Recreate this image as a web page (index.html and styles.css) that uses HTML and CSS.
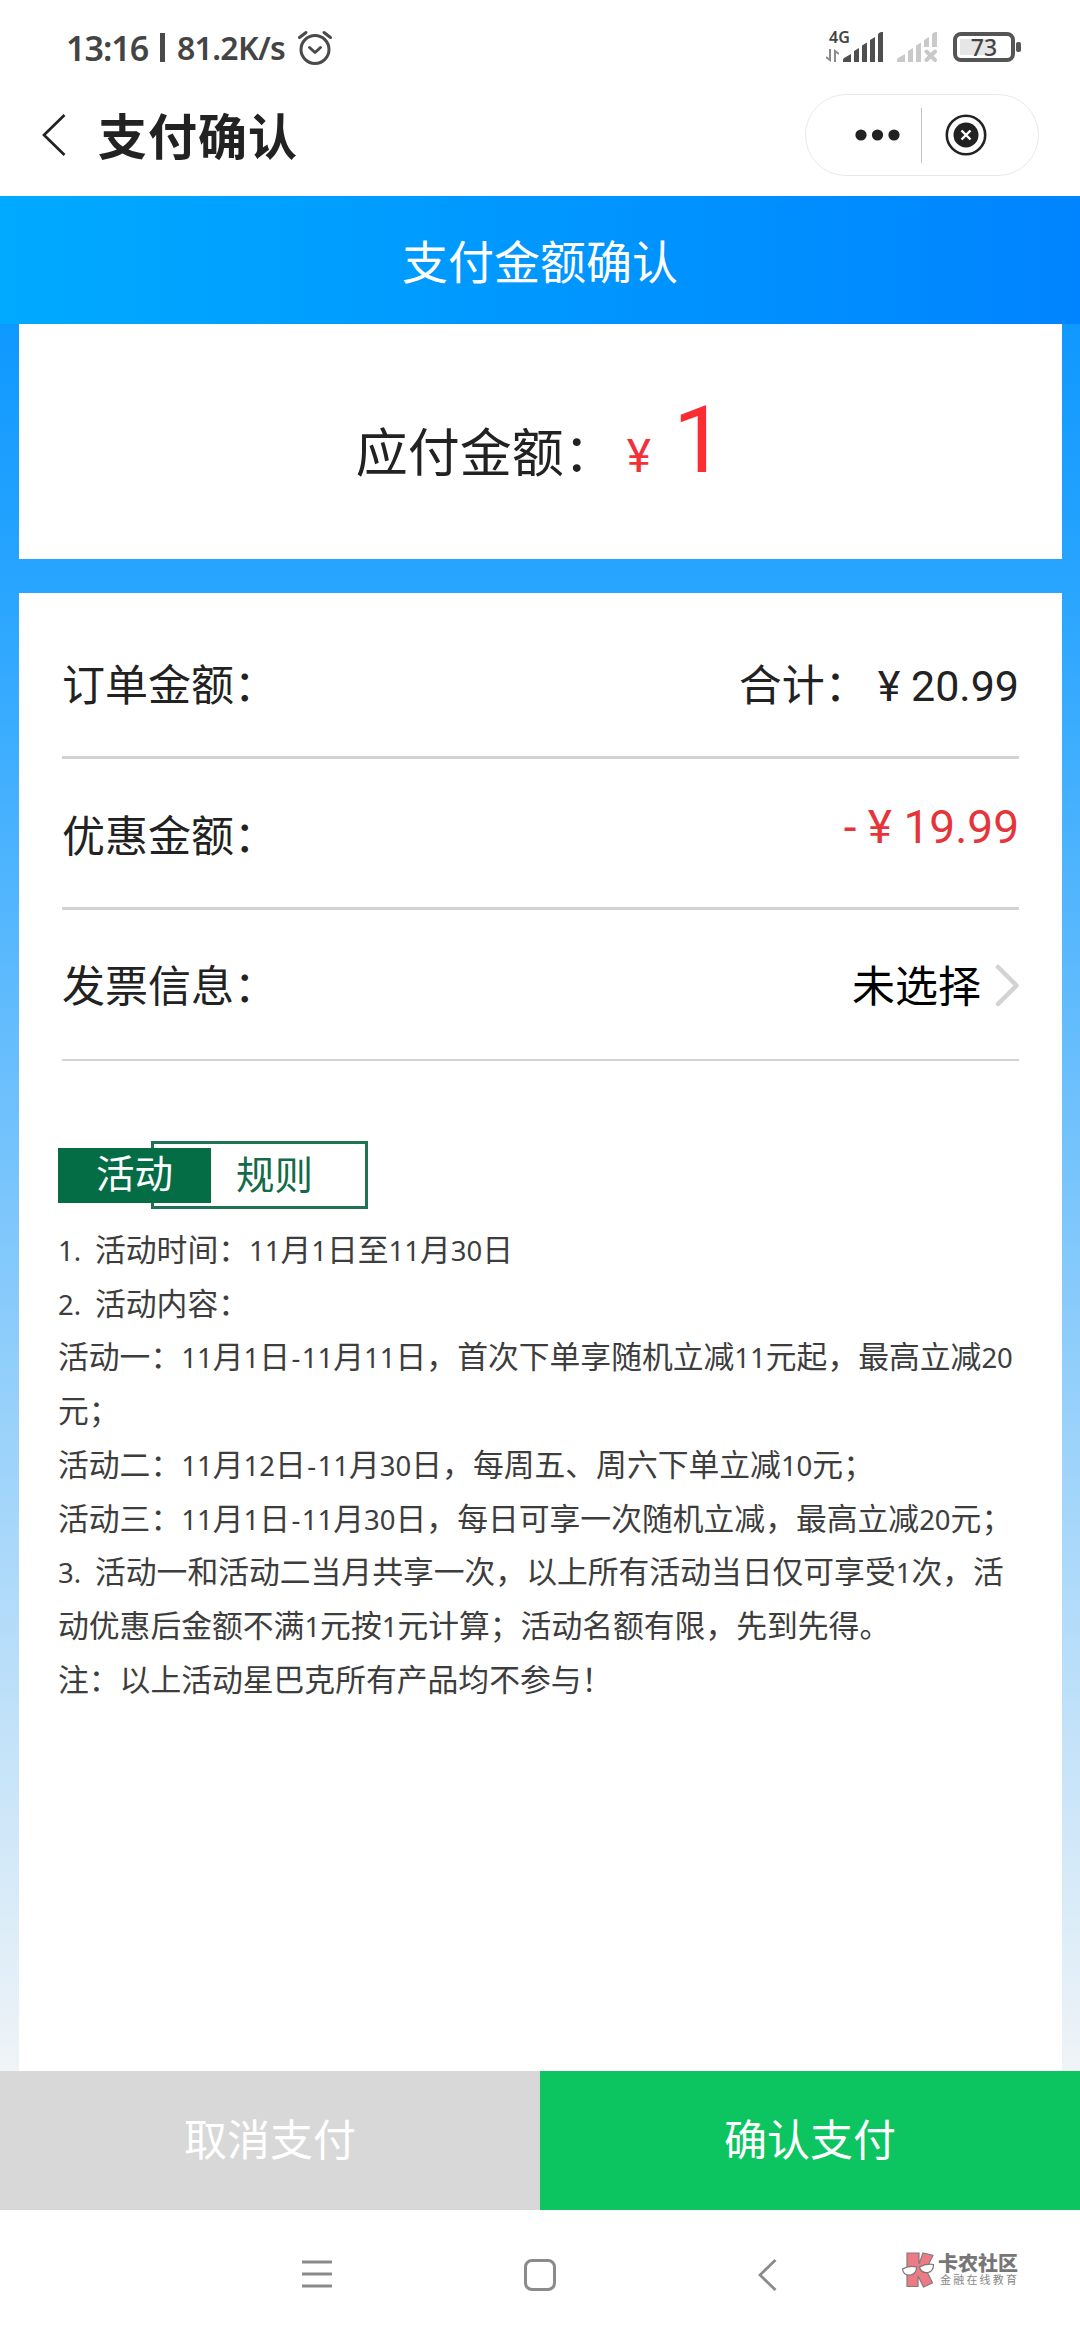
FILE: index.html
```html
<!DOCTYPE html>
<html lang="zh-CN">
<head>
<meta charset="utf-8">
<title>支付确认</title>
<link rel="stylesheet" href="styles.css">
</head>
<body>
<div class="screen">
  <header class="statusbar">
    <div class="status-left">
      <span class="clock">13:16</span>
      <span class="status-sep"></span>
      <span class="speed">81.2K/s</span>
      <svg class="alarm" width="36" height="36" viewBox="0 0 36 36" fill="none" stroke="#4a4a4a" stroke-width="3" stroke-linecap="round" stroke-linejoin="round"><circle cx="18" cy="20.500" r="14"/><path d="M12.500 18.500l5.500 5 5.500-5M2.500 8.500l6.500-5M33.500 8.500l-6.500-5"/></svg>
    </div>
    <div class="status-right">
      <div class="network">
        <span class="network-type">4G</span>
        <svg width="13" height="13" viewBox="0 0 13 13" fill="none" stroke="#8a8a8a" stroke-width="2"><path d="M4 0v11L0 8M9 13V2l4 3"/></svg>
      </div>
      <svg class="signal" width="40" height="30" viewBox="0 0 40 30" fill="#4f4f4f"><path d="M0 30v-2q0-1 1-2l7-4v8zM11 30V19l5-3v14zM19 30V13.500l5-3V30zM27 30V8l5-3v25zM35 30V3q0-1 1-2l2-1h2v30z"/></svg>
      <svg class="signal signal-off" width="40" height="30" viewBox="0 0 40 30" fill="#c9c9c9"><path d="M0 30v-2q0-1 1-2l7-4v8zM11 30V19l5-3v14zM19 30V13.500l5-3V30zM27 15V8l5-3v10zM35 15V3q0-1 1-2l2-1h2v15z"/><path d="M29.500 19.500l8.500 8.500M38 19.500l-8.500 8.500" stroke="#c9c9c9" stroke-width="4" stroke-linecap="round"/></svg>
      <div class="battery"><span class="battery-box"><span class="battery-value">73</span></span><span class="battery-tip"></span></div>
    </div>
  </header>

  <nav class="titlebar">
    <svg class="back" width="24" height="42" viewBox="0 0 24 42" fill="none" stroke="#222" stroke-width="2.700"><path d="M22.500 1L2 21l20.500 20"/></svg>
    <h1 class="page-title">支付确认</h1>
    <div class="capsule">
      <svg width="45" height="12" viewBox="0 0 45 12" fill="#222"><circle cx="6" cy="6" r="5.600"/><circle cx="22.500" cy="6" r="5.600"/><circle cx="39" cy="6" r="5.600"/></svg>
      <span class="capsule-divider"></span>
      <svg width="42" height="42" viewBox="0 0 42 42"><circle cx="21" cy="21" r="19.200" fill="none" stroke="#222" stroke-width="2.600"/><circle cx="21" cy="21" r="12.500" fill="#222"/><path d="M16.500 16.500l9 9M25.500 16.500l-9 9" stroke="#fff" stroke-width="2.400"/></svg>
    </div>
  </nav>

  <main class="content">
    <h2 class="banner">支付金额确认</h2>
    <div class="cards">
      <section class="card due">
        <span class="due-label">应付金额：</span><span class="due-sign">¥</span><span class="due-value">1</span>
      </section>
      <section class="card detail">
        <div class="row"><span>订单金额：</span><span class="total"><span>合计：</span><span>¥ 20.99</span></span></div>
        <div class="row"><span>优惠金额：</span><span class="discount">- ¥ 19.99</span></div>
        <div class="row row-last"><span>发票信息：</span><span class="choice">未选择<svg width="24" height="43" viewBox="0 0 24 43" fill="none" stroke="#d3d3d3" stroke-width="4.500" stroke-linecap="round" stroke-linejoin="round"><path d="M3 3l18.500 18.500L3 40"/></svg></span></div>
        <div class="rules-heading"><span class="rules-tag">活动</span><span class="rules-name">规则</span></div>
        <div class="rules">
          <p><b class="num">1.</b>活动时间：<b>11</b>月<b>1</b>日至<b>11</b>月<b>30</b>日</p>
          <p><b class="num">2.</b>活动内容：</p>
          <p>活动一：<b>11</b>月<b>1</b>日<b class="dash">-</b><b>11</b>月<b>11</b>日，首次下单享随机立减<b>11</b>元起，最高立减<b>20</b><br>元；</p>
          <p>活动二：<b>11</b>月<b>12</b>日<b class="dash">-</b><b>11</b>月<b>30</b>日，每周五、周六下单立减<b>10</b>元；</p>
          <p>活动三：<b>11</b>月<b>1</b>日<b class="dash">-</b><b>11</b>月<b>30</b>日，每日可享一次随机立减，最高立减<b>20</b>元；</p>
          <p><b class="num">3.</b>活动一和活动二当月共享一次，以上所有活动当日仅可享受<b>1</b>次，活<br>动优惠后金额不满<b>1</b>元按<b>1</b>元计算；活动名额有限，先到先得。</p>
          <p>注：以上活动星巴克所有产品均不参与！</p>
        </div>
      </section>
    </div>
  </main>

  <div class="actions">
    <button class="action cancel">取消支付</button>
    <button class="action confirm">确认支付</button>
  </div>

  <footer class="navbar">
    <svg width="30" height="30" viewBox="0 0 30 30" stroke="#8b8b8b" stroke-width="3"><path d="M0 3h30M0 15h30M0 27h30"/></svg>
    <svg width="32" height="32" viewBox="0 0 32 32" fill="none" stroke="#8b8b8b" stroke-width="3"><rect x="1.500" y="1.500" width="29" height="29" rx="6.500"/></svg>
    <svg width="19" height="32" viewBox="0 0 19 32" fill="none" stroke="#8b8b8b" stroke-width="2.800"><path d="M17.500 1L2 16l15.500 15"/></svg>
    <div class="brand">
      <svg width="34" height="36" viewBox="0 0 34 36"><path d="M6 1h12v11l4-11 10 2.500-7 14 6.500 13.500-9 4-5.500-11v10.500H6z" fill="#ec7b85" stroke="#8a7a7b" stroke-width="1.200"/><path d="M1.500 17q6-4 14-2 0 7-6 8-7 1-8-6zM18.500 15q7-4 14-2.500 0 7-5.500 8-7 1-8.500-5.500z" fill="#fff" stroke="#777" stroke-width="1.200"/></svg>
      <div class="brand-text"><span class="brand-name">卡农社区</span><span class="brand-sub">金融在线教育</span></div>
    </div>
  </footer>
</div>
</body>
</html>
```
FILE: styles.css
```css
* { box-sizing: border-box; margin: 0; padding: 0; }
body { font-family: Roboto, "Noto Sans CJK SC", sans-serif; color: #222; background: #fff; }
svg { display: block; flex: none; }
.screen { width: 1080px; height: 2340px; display: flex; flex-direction: column; overflow: hidden; white-space: nowrap; }

.statusbar { height: 94px; padding: 0 59px 0 66px; display: flex; justify-content: space-between; color: #444; }
.status-left { display: flex; align-items: center; height: 95px; font-family: "Noto Sans", "Noto Sans CJK SC", sans-serif; }
.clock { width: 94px; font-size: 34px; font-weight: 600; letter-spacing: -1px; }
.status-sep { width: 5px; height: 29px; background: #4a4a4a; margin-right: 12px; }
.speed { width: 120px; font-size: 32px; font-weight: 600; letter-spacing: -0.700px; }
.alarm { margin-bottom: 2px; }
.status-right { display: flex; align-items: flex-start; padding-top: 31px; }
.network { width: 28px; margin-right: -11px; }
.network-type { display: block; height: 18px; padding-left: 3px; font: 600 16px/13px "Noto Sans", sans-serif; }
.signal { margin: 1px 14px 0 0; }
.signal-off { margin-right: 16px; }
.battery { display: flex; align-items: center; gap: 1px; padding-top: 1px; }
.battery-box { width: 62px; height: 30px; border: 4px solid #555; border-radius: 8px; background: linear-gradient(#e6e6e6, #e6e6e6) 3px 3px / 34px 16px no-repeat; display: flex; align-items: center; justify-content: center; }
.battery-value { font: 500 23px/22px "Noto Sans", sans-serif; }
.battery-tip { width: 5px; height: 10px; border-radius: 2px; background: #555; }

.titlebar { height: 102px; padding: 0 41px 20px 42px; display: flex; align-items: center; }
.page-title { margin-left: 32px; padding-top: 7px; font-size: 49px; line-height: 75px; font-weight: 700; letter-spacing: 1px; }
.capsule { width: 234px; height: 82px; margin-left: auto; border: 1px solid #e9e9e9; border-radius: 41px; display: flex; align-items: center; padding-left: 49px; }
.capsule-divider { width: 1px; height: 55px; background: #c4c4c4; margin: 0 23px 0 21px; }

.content { height: 1875px; display: flex; flex-direction: column; }
.banner { height: 128px; background: linear-gradient(90deg, #00aaff, #0084ff); color: #fff; font-size: 46px; font-weight: 400; line-height: 135px; text-align: center; }
.cards { flex: 1; background: linear-gradient(#0f98ff, #28a5ff 15%, #f0f4f7); padding: 0 18px 0 19px; display: flex; flex-direction: column; gap: 34px; }
.card { background: #fff; }
.due { height: 235px; padding-top: 67px; display: flex; align-items: baseline; justify-content: center; }
.due-label { font-size: 52px; line-height: 60px; }
.due-sign { font-size: 46px; color: #f03238; margin-left: 11px; margin-right: 22px; }
.due-value { font-size: 93px; line-height: 100px; color: #fa2d33; }
.detail { flex: 1; padding: 15px 43px 0; }
.row { height: 151px; border-bottom: 3px solid #d3d3d3; display: flex; justify-content: space-between; align-items: center; font-size: 43px; }
.row-last { border-bottom-width: 2px; padding-bottom: 3px; }
.total { display: flex; align-items: baseline; gap: 10px; }
.discount { font-size: 46px; color: #e5353b; margin-bottom: 12px; }
.choice { display: flex; align-items: center; gap: 14px; color: #000; }
.choice svg { margin-top: 4px; }

.rules-heading { display: flex; align-items: center; margin: 80px 0 0 -4px; height: 68px; }
.rules-tag { width: 153px; height: 55px; padding-left: 38px; background: #046d46; color: #fff; font-size: 38.500px; line-height: 54px; z-index: 1; }
.rules-name { width: 217px; height: 68px; margin-left: -60px; padding-left: 82px; border: 3px solid #217153; color: #146b49; font-size: 38.500px; line-height: 63px; }
.rules { margin: 12px 0 0 -4px; font-family: "Noto Sans CJK SC", sans-serif; font-size: 30.800px; line-height: 53.700px; color: #3d3d3d; }
.rules b { font-family: "Noto Sans", sans-serif; font-size: 27.500px; font-weight: 400; line-height: 1; }
.rules .num { display: inline-block; width: 37px; }
.rules .dash { padding: 0 1.500px; }

.actions { display: flex; height: 139px; }
.action { flex: 1; border: 0; padding-bottom: 7px; font: 400 43px "Noto Sans CJK SC", sans-serif; color: #fff; }
.cancel { background: #d8d8d8; }
.confirm { background: #0cc560; }

.navbar { flex: 1; display: flex; align-items: flex-start; padding: 49px 0 0 302px; }
.navbar > svg:nth-child(2) { margin-left: 192px; }
.navbar > svg:nth-child(3) { margin-left: 202px; }
.brand { margin: -7px 0 0 124px; display: flex; gap: 3px; }
.brand-text { display: flex; flex-direction: column; padding-top: 2px; }
.brand-name { font-size: 20px; line-height: 20px; font-weight: 900; color: #777; }
.brand-sub { margin-left: 2px; font-size: 11px; line-height: 14px; letter-spacing: 2.200px; color: #888; }
```
